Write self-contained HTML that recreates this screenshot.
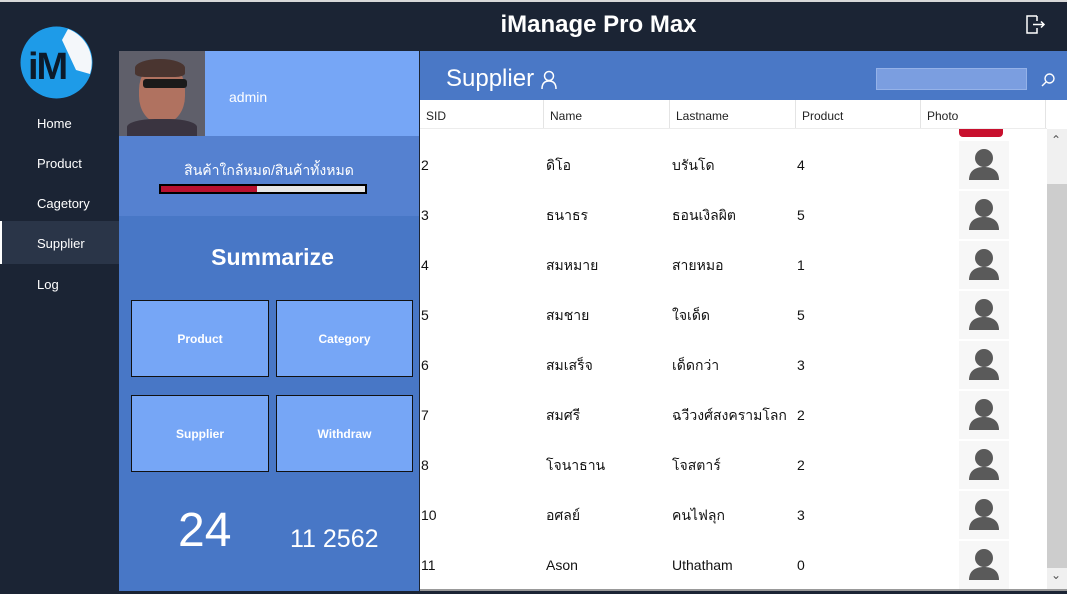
<!DOCTYPE html>
<html><head><meta charset="utf-8"><style>
*{margin:0;padding:0;box-sizing:border-box}
body{width:1067px;height:591px;overflow:hidden;background:#1b2434;font-family:"Liberation Sans","DejaVu Sans",sans-serif;position:relative}
.a{position:absolute}
.nav{color:#fff;font-size:13px;left:37px}
.box{position:absolute;background:#76a6f6;border:1px solid #111;color:#fff;font-size:12px;font-weight:bold;display:flex;align-items:center;justify-content:center}
.cell{position:absolute;font-size:14px;color:#111;line-height:20px;height:20px}
.th{position:absolute;top:100px;height:29px;background:#fff;border-right:1px solid #e4e4e4;font-size:12px;color:#222;padding:9px 0 0 6px}
.ph{position:absolute;left:959px;width:50px;height:48px;background:#f7f7f7}
</style></head><body>
<div class="a" style="left:0;top:0;width:1067px;height:2px;background:#d8d8d8"></div>
<div class="a" style="left:0;top:10px;width:1197px;text-align:center;color:#fff;font-size:24px;font-weight:bold;line-height:30px">iManage Pro Max</div>
<svg class="a" style="left:1025px;top:13px" width="22" height="22" viewBox="0 0 22 22" fill="none" stroke="#fff" stroke-width="1.5"><path d="M12 3H2v17h10V15M12 3v5"/><path d="M8 11.5h11M16 8.5l3 3-3 3"/></svg>
<svg class="a" style="left:20px;top:26px" width="73" height="73" viewBox="0 0 73 73"><circle cx="36.5" cy="36.5" r="36" fill="#1e9be8"/><path d="M48 3A36 36 0 0 1 70 48L56 44 42 14z" fill="#f4f7fa"/><text x="8" y="53" font-family="Liberation Sans" font-weight="bold" font-size="38" fill="#0c1a2a" letter-spacing="-2">iM</text></svg>
<div class="a nav" style="top:116px">Home</div>
<div class="a nav" style="top:156px">Product</div>
<div class="a nav" style="top:196px">Cagetory</div>
<div class="a" style="left:0;top:221px;width:119px;height:43px;background:#2a3548;border-left:2px solid #fff"></div>
<div class="a nav" style="top:236px">Supplier</div>
<div class="a nav" style="top:277px">Log</div>
<div class="a" style="left:119px;top:51px;width:300px;height:540px;background:#4877c6"></div>
<div class="a" style="left:205px;top:51px;width:214px;height:85px;background:#76a6f6"></div>
<div class="a" style="left:119px;top:51px;width:86px;height:85px;background:#5f5f6a;overflow:hidden">
<div class="a" style="left:20px;top:12px;width:46px;height:60px;border-radius:45%;background:#b07260"></div>
<div class="a" style="left:16px;top:8px;width:50px;height:18px;border-radius:50% 50% 20% 20%;background:#4a3530"></div>
<div class="a" style="left:24px;top:28px;width:44px;height:9px;background:#1a1a1a;border-radius:3px"></div>
<div class="a" style="left:8px;top:68px;width:70px;height:20px;background:#3a3440;border-radius:40% 40% 0 0"></div>
</div>
<div class="a" style="left:229px;top:89px;color:#fff;font-size:14px">admin</div>
<div class="a" style="left:119px;top:136px;width:300px;height:80px;background:#5581d0"></div>
<div class="a" style="left:119px;top:160px;width:300px;text-align:center;color:#fff;font-size:14px">สินค้าใกล้หมด/สินค้าทั้งหมด</div>
<div class="a" style="left:159px;top:184px;width:208px;height:10px;background:#000;padding:2px"><div style="width:100%;height:100%;background:#e6e6e6"><div style="width:47%;height:100%;background:#b8102f"></div></div></div>
<div class="a" style="left:119px;top:244px;width:307px;text-align:center;color:#fff;font-size:23px;font-weight:bold">Summarize</div>
<div class="box" style="left:131px;top:300px;width:138px;height:77px">Product</div>
<div class="box" style="left:276px;top:300px;width:137px;height:77px">Category</div>
<div class="box" style="left:131px;top:395px;width:138px;height:77px">Supplier</div>
<div class="box" style="left:276px;top:395px;width:137px;height:77px">Withdraw</div>
<div class="a" style="left:178px;top:503px;color:#fff;font-size:48px;line-height:56px">24</div>
<div class="a" style="left:290px;top:524px;color:#fff;font-size:25px;line-height:30px">11 2562</div>
<div class="a" style="left:420px;top:51px;width:647px;height:49px;background:#4a78c6"></div>
<div class="a" style="left:446px;top:64px;color:#fff;font-size:24px;line-height:30px">Supplier</div>
<svg class="a" style="left:540px;top:70px" width="18" height="20" viewBox="0 0 18 20" fill="none" stroke="#fff" stroke-width="1.5"><circle cx="9" cy="6" r="4.5"/><path d="M2 19c0-6 3-8 7-8s7 2 7 8"/></svg>
<div class="a" style="left:876px;top:68px;width:151px;height:22px;background:#7b9ee0;border:1px solid #95b2e8"></div>
<svg class="a" style="left:1040px;top:72px" width="16" height="16" viewBox="0 0 16 16" fill="none" stroke="#fff" stroke-width="1.4"><circle cx="9.5" cy="6.5" r="4.5"/><path d="M6.3 9.7L2 14"/></svg>
<div class="a" style="left:420px;top:100px;width:647px;height:491px;background:#fff"></div>
<div class="th" style="left:420px;width:124px">SID</div>
<div class="th" style="left:544px;width:126px">Name</div>
<div class="th" style="left:670px;width:126px">Lastname</div>
<div class="th" style="left:796px;width:125px">Product</div>
<div class="th" style="left:921px;width:125px">Photo</div>
<div class="a" style="left:420px;top:128px;width:627px;height:1px;background:#ececec"></div>
<div class="a" style="left:959px;top:129px;width:44px;height:8px;background:#c8102e;border-radius:0 0 4px 4px"></div>
<div class="a" style="left:1047px;top:129px;width:20px;height:460px;background:#f0f0f0"></div>
<div class="a" style="left:1047px;top:184px;width:20px;height:384px;background:#cdcdcd"></div>
<div class="a" style="left:1051px;top:133px;color:#555;font-size:12px">&#8963;</div>
<div class="a" style="left:1051px;top:568px;color:#555;font-size:12px">&#8964;</div>
<div class="a" style="left:420px;top:589px;width:647px;height:2px;background:#999"></div>
<div id="rows"></div>
<script>
var d=[["2","ดิโอ","บรันโด","4"],["3","ธนาธร","ธอนเงิลผิต","5"],["4","สมหมาย","สายหมอ","1"],["5","สมชาย","ใจเด็ด","5"],["6","สมเสร็จ","เด็ดกว่า","3"],["7","สมศรี","ฉวีวงศ์สงครามโลก","2"],["8","โจนาธาน","โจสตาร์","2"],["10","อศลย์","คนไฟลุก","3"],["11","Ason","Uthatham","0"]];
var h="";d.forEach(function(r,i){var y=155+i*50;
h+='<div class="cell" style="left:421px;top:'+y+'px">'+r[0]+'</div><div class="cell" style="left:546px;top:'+y+'px">'+r[1]+'</div><div class="cell" style="left:672px;top:'+y+'px">'+r[2]+'</div><div class="cell" style="left:797px;top:'+y+'px">'+r[3]+'</div>';
h+='<div class="ph" style="top:'+(y-14)+'px"><svg width="50" height="48" viewBox="0 0 50 48"><circle cx="25" cy="17" r="9" fill="#5a5a5a"/><path d="M10 39c0-9 6-13 15-13s15 4 15 13z" fill="#5a5a5a"/></svg></div>';});
document.getElementById("rows").innerHTML=h;
</script>
</body></html>
